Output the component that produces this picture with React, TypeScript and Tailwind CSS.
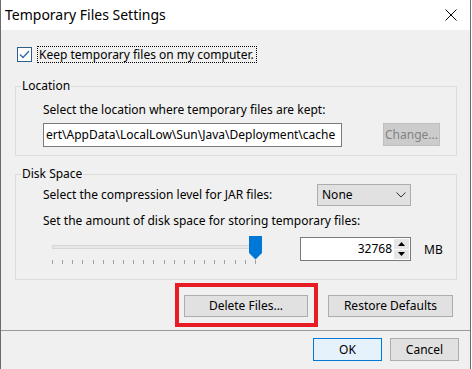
export default function App() {
  const ticks = Array.from({ length: 21 });
  return (
    <div className="w-[472px] h-[369px] bg-white flex font-['Noto_Sans',sans-serif] text-[12px] text-black overflow-hidden">
      <div className="w-[471px] h-[369px] flex flex-col border-x border-[#6b6b6b] bg-[#f0f0f0]">
        {/* Title bar */}
        <div className="h-[30px] shrink-0 bg-white flex items-center justify-between">
          <span className="pl-[4px] text-[14px] leading-[20px]">Temporary Files Settings</span>
          <svg className="mr-[13px]" width="12" height="12" viewBox="0 0 12 12">
            <path d="M0.5 0.5 L11.5 11.5 M11.5 0.5 L0.5 11.5" stroke="#000" strokeWidth="1" fill="none" />
          </svg>
        </div>

        {/* Checkbox row */}
        <div className="mt-[16px] ml-[16px] flex items-center h-[16px]">
          <span className="w-[15px] h-[15px] border border-[#2c5f8a] bg-white flex items-center justify-center">
            <svg width="11" height="9" viewBox="0 0 11 9">
              <path d="M1 4.5 L4 7.5 L10 1" fill="none" stroke="#2b6cb0" strokeWidth="1.3" />
            </svg>
          </span>
          <span className="ml-[5px] pl-[1px] pr-[2px] h-[17px] leading-[15px] border border-dotted border-black">
            Keep temporary files on my computer.
          </span>
        </div>

        {/* Location */}
        <fieldset className="mt-[16px] ml-[14px] w-[442px] border border-[#dcdcdc] px-[5px] pt-[8px] pb-[8px]">
          <legend className="px-[1px] leading-[16px]">Location</legend>
          <div className="pl-[22px] flex flex-col">
            <div className="h-[16px] leading-[16px]">Select the location where temporary files are kept:</div>
            <div className="mt-[5px] flex items-start">
              <div className="w-[299px] h-[24px] bg-white border border-[#7a7a7a] flex items-center pl-[2px] overflow-hidden whitespace-nowrap">
                ert\AppData\LocalLow\Sun\Java\Deployment\cache
              </div>
              <div className="ml-[41px] w-[57px] h-[23px] bg-[#cccccc] border border-[#bfbfbf] text-[#838383] flex items-center justify-center">
                Change...
              </div>
            </div>
          </div>
        </fieldset>

        {/* Disk Space */}
        <fieldset className="mt-[10px] ml-[14px] w-[442px] border border-[#dcdcdc] px-[5px] pt-[2px] pb-[15px]">
          <legend className="px-[1px] leading-[16px]">Disk Space</legend>
          <div className="pl-[22px] flex flex-col">
            <div className="h-[22px] flex items-center">
              <span className="w-[274px]">Select the compression level for JAR files:</span>
              <div className="w-[94px] h-[22px] bg-[#e1e1e1] border border-[#adadad] flex items-center justify-between pl-[4px] pr-[4px]">
                <span>None</span>
                <svg width="10" height="6" viewBox="0 0 10 6">
                  <path d="M0.5 0.5 L5 5 L9.5 0.5" fill="none" stroke="#333" strokeWidth="1" />
                </svg>
              </div>
            </div>
            <div className="mt-[7px] h-[16px] leading-[16px]">Set the amount of disk space for storing temporary files:</div>
            <div className="mt-[7px] h-[28px] flex items-start">
              {/* Slider */}
              <div className="relative ml-[9px] w-[216px] h-[28px] flex flex-col">
                <div className="mt-[9px] w-[207px] h-[4px] border border-[#d6d6d6] bg-[#e7e7e7]" />
                <div className="mt-[11px] w-[204px] h-[4px] flex justify-between">
                  {ticks.map((_, i) => (
                    <span key={i} className="w-[1px] h-[4px] bg-[#a0a0a0]" />
                  ))}
                </div>
                <svg className="absolute left-[197px] top-0" width="13" height="24" viewBox="0 0 13 24">
                  <polygon points="0,0 13,0 13,17 6.5,23.5 0,17" fill="#0078d7" />
                </svg>
              </div>
              {/* Spin box */}
              <div className="ml-[32px] mt-[1px] w-[111px] h-[24px] bg-white border border-[#7a7a7a] flex items-center">
                <span className="flex-1 text-right pr-[2px]">32768</span>
                <div className="w-[15px] h-[20px] mr-[1px] flex flex-col gap-[1px]">
                  <div className="flex-1 bg-[#e6e6e6] flex items-center justify-center">
                    <svg width="7" height="4" viewBox="0 0 7 4"><polygon points="3.5,0 7,4 0,4" fill="#000" /></svg>
                  </div>
                  <div className="flex-1 bg-[#e6e6e6] flex items-center justify-center">
                    <svg width="7" height="4" viewBox="0 0 7 4"><polygon points="0,0 7,0 3.5,4" fill="#000" /></svg>
                  </div>
                </div>
              </div>
              <span className="ml-[13px] mt-[6px] leading-[16px]">MB</span>
            </div>
          </div>
        </fieldset>

        {/* Delete / Restore */}
        <div className="mt-[15px] flex justify-end pr-[17px] gap-[20px]">
          <div className="relative">
            <div className="w-[124px] h-[22px] bg-[#e1e1e1] border border-[#adadad] flex items-center justify-center">
              Delete Files...
            </div>
            <span className="pointer-events-none absolute -left-[9px] -right-[10px] -top-[12px] -bottom-[10px] border-4 border-[#e81c24]" />
          </div>
          <div className="w-[125px] h-[22px] bg-[#e1e1e1] border border-[#adadad] flex items-center justify-center">
            Restore Defaults
          </div>
        </div>

        {/* Separator */}
        <div className="mt-[13px] h-[1px] bg-[#9a9a9a]" />

        {/* OK / Cancel */}
        <div className="mt-[7px] flex justify-end pr-[11px] gap-[8px]">
          <div className="w-[69px] h-[23px] bg-[#e5f1fb] border border-[#0078d7] flex items-center justify-center">OK</div>
          <div className="w-[69px] h-[23px] bg-[#e1e1e1] border border-[#adadad] flex items-center justify-center">Cancel</div>
        </div>
      </div>
    </div>
  );
}
